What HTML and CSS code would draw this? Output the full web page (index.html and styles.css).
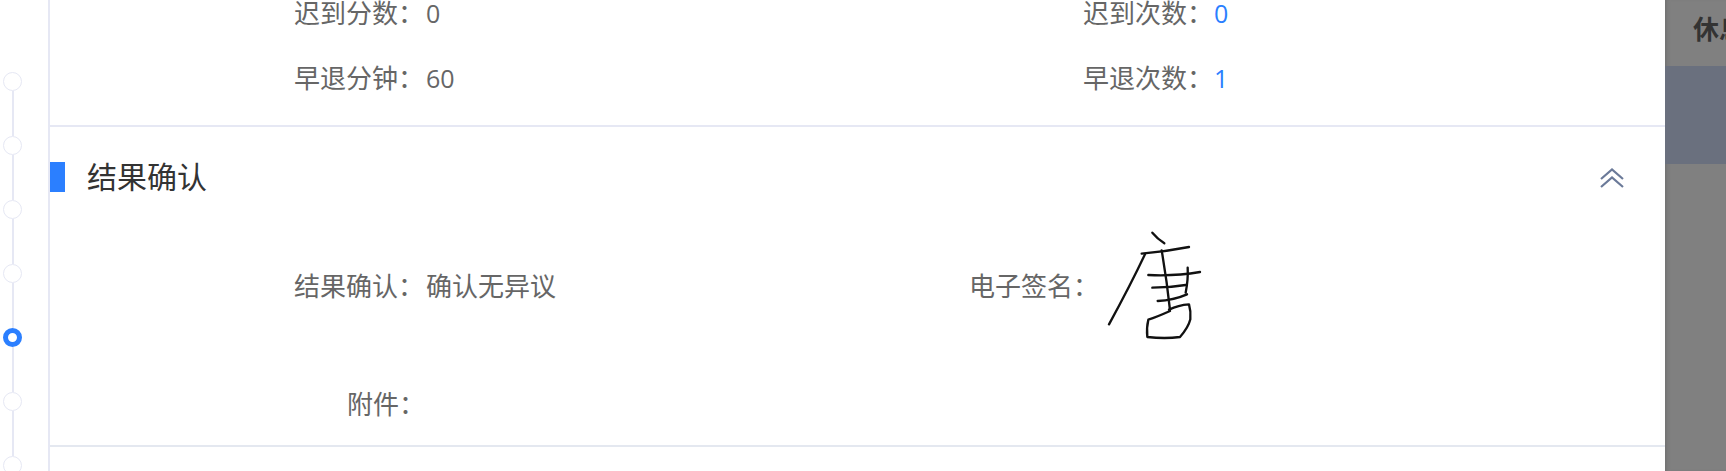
FILE: index.html
```html
<!DOCTYPE html>
<html lang="zh-CN">
<head>
<meta charset="utf-8">
<title>结果确认</title>
<link rel="stylesheet" href="styles.css">
</head>
<body>
<div class="page">
  <nav class="rail">
    <span class="dot"></span><span class="link"></span>
    <span class="dot"></span><span class="link"></span>
    <span class="dot"></span><span class="link"></span>
    <span class="dot"></span><span class="link"></span>
    <span class="dot active"></span><span class="link"></span>
    <span class="dot"></span><span class="link"></span>
    <span class="dot"></span>
  </nav>
  <main class="panel">
    <section class="stats">
      <div class="row">
        <div class="field wide"><span class="label">迟到分数：</span><span class="value">0</span></div>
        <div class="field"><span class="label">迟到次数：</span><span class="value link-value">0</span></div>
      </div>
      <div class="row">
        <div class="field wide"><span class="label">早退分钟：</span><span class="value">60</span></div>
        <div class="field"><span class="label">早退次数：</span><span class="value link-value">1</span></div>
      </div>
    </section>
    <section class="result">
      <header class="head">
        <span class="bar"></span>
        <h2 class="title">结果确认</h2>
        <svg class="chevrons" viewBox="0 0 24 20" aria-hidden="true"><path d="M1 11 L12 1.5 L23 11 M1 19 L12 9.5 L23 19"/></svg>
      </header>
      <div class="row sign-row">
        <div class="field narrow"><span class="label">结果确认：</span><span class="value cjk">确认无异议</span></div>
        <div class="field"><span class="label">电子签名：</span>
          <svg class="signature" viewBox="470 60 300 330" aria-hidden="true">
            <path d="M612 65 Q628 84 648 97"/>
            <path d="M580 128 Q650 122 722 108"/>
            <path d="M590 130 Q545 225 482 340"/>
            <path d="M640 118 Q655 205 665 297"/>
            <path d="M600 192 Q680 196 755 183"/>
            <path d="M718 170 Q720 205 712 245"/>
            <path d="M612 230 Q665 230 712 222"/>
            <path d="M628 270 Q675 268 716 250"/>
            <path d="M665 300 Q625 318 600 326 Q594 350 597 378 Q650 384 695 378 Q720 350 726 325 Q728 300 722 280 Q690 282 662 296"/>
          </svg>
        </div>
      </div>
      <div class="row attach-row">
        <div class="field"><span class="label">附件：</span></div>
      </div>
    </section>
  </main>
  <aside class="mask">
    <div class="mask-title">休息</div>
    <div class="mask-band"></div>
  </aside>
</div>
</body>
</html>
```
FILE: styles.css
```css
* { box-sizing: border-box; }
html, body { margin: 0; height: 100%; overflow: hidden; background: #fff; }
body { font-family: "Open Sans", "Noto Sans CJK SC", sans-serif; color: #666; }
.page { display: flex; width: 1726px; height: 471px; overflow: hidden; }

.rail { width: 48px; flex: none; display: flex; flex-direction: column; padding: 72px 0 0 3px; }
.dot { flex: none; width: 19px; height: 19px; border: 1.5px solid #e6e8f4; border-radius: 50%; background: #fff; }
.dot.active { border: 5.5px solid #2b7fff; }
.link { flex: none; width: 2px; height: 45px; margin-left: 9px; background: #e6e8f4; }

.panel { width: 1617px; flex: none; border-left: 2px solid #e6e8f4; background: #fff; }
.stats { margin-top: -20px; padding-bottom: 15px; border-bottom: 2px solid #e6e8f4; }
.row { display: flex; align-items: center; padding-left: 244px; }
.stats .row { height: 65px; }
.field { display: flex; align-items: center; font-size: 26px; line-height: 36px; }
.field.wide { width: 789px; }
.field.narrow { width: 675px; }
.label { width: 130px; flex: none; text-align: right; color: #666; }
.value { margin-left: 2px; color: #666; font-size: 25px; }
.value.cjk { font-size: 26px; margin-left: 2px; }
.link-value { color: #2b7fff; margin-left: 1px; }

.result { border-bottom: 2px solid #e4e8f0; height: 320px; display: flex; flex-direction: column; }
.head { display: flex; align-items: center; height: 100px; flex: none; }
.bar { width: 15px; height: 30px; background: #2b7fff; flex: none; }
.title { margin: 0 0 4px 22px; font-size: 30px; line-height: 40px; font-weight: 400; color: #333; font-family: "Noto Sans CJK SC", sans-serif; }
.chevrons { margin-left: auto; margin-right: 41px; margin-top: 2px; width: 24px; height: 20px; fill: none; stroke: #6b7a99; stroke-width: 2.2; }
.sign-row { height: 118px; flex: none; }
.signature { width: 100px; height: 110px; margin-left: 6px; fill: none; stroke: #111; stroke-width: 7; stroke-linecap: round; stroke-linejoin: round; }
.attach-row { height: 118px; flex: none; padding-left: 245px; }

.mask { flex: 1; background: #808080; box-shadow: inset 4px 0 4px -3px #6c6c6c; overflow: hidden; }
.mask-title { height: 66px; padding: 10px 0 0 28px; font-size: 26px; line-height: 36px; font-weight: 700; color: #333; white-space: nowrap; font-family: "Noto Sans CJK SC", sans-serif; }
.mask-band { height: 98px; background: #6a707e; }
```
